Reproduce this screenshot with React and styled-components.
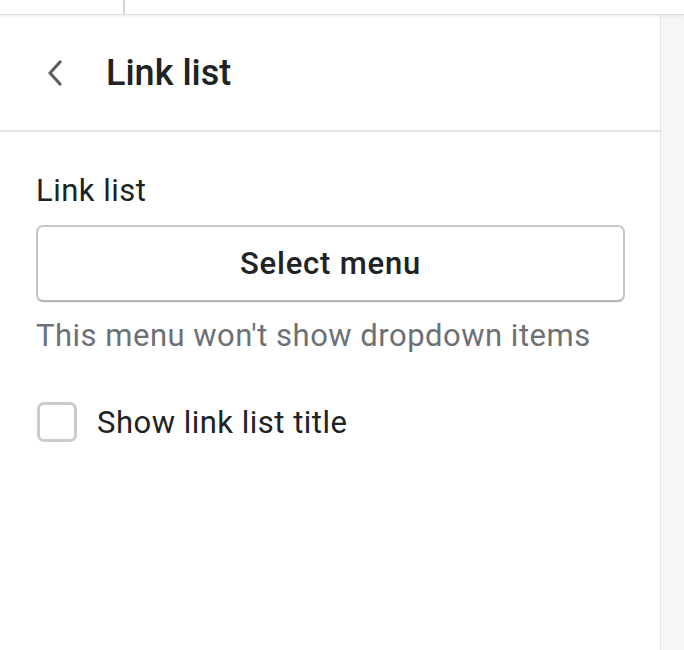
import React, { useState } from "react";
import styled, { createGlobalStyle } from "styled-components";

const GlobalStyle = createGlobalStyle`
  body {
    margin: 0;
    background: #ffffff;
    font-family: Roboto, "Liberation Sans", sans-serif;
    color: #202223;
  }
`;

const Page = styled.div`
  display: flex;
  flex-direction: column;
  height: 650px;
  overflow: hidden;
`;

const TopBar = styled.div`
  display: flex;
  height: 14px;
  flex-shrink: 0;
  border-bottom: 1px solid #dcdee0;
  box-shadow: 0 1px 3px rgba(0, 0, 0, 0.08);
  position: relative;
  z-index: 1;
`;

const TopCell = styled.div`
  width: 123px;
  border-right: 2px solid #d2d4d6;
`;

const Main = styled.div`
  display: flex;
  flex: 1;
`;

const Panel = styled.div`
  width: 660px;
  border-right: 1px solid #e1e3e5;
  display: flex;
  flex-direction: column;
`;

const Strip = styled.div`
  flex: 1;
  background: #f6f6f7;
`;

const Header = styled.div`
  display: flex;
  align-items: center;
  height: 115px;
  padding-left: 40px;
  gap: 36px;
  border-bottom: 2px solid #e1e3e5;
`;

const BackButton = styled.button`
  display: flex;
  align-items: center;
  justify-content: center;
  background: none;
  border: none;
  padding: 0;
  width: 30px;
  height: 30px;
  cursor: pointer;
`;

const Title = styled.h2`
  margin: 0;
  font-size: 36px;
  font-weight: 500;
  color: #202223;
`;

const Body = styled.div`
  padding: 39px 35px 0 36px;
`;

const Label = styled.div`
  font-size: 31px;
  letter-spacing: 0.5px;
  line-height: 40px;
  color: #202223;
  margin-bottom: 14px;
`;

const SelectButton = styled.button`
  width: 100%;
  height: 77px;
  background: #ffffff;
  border: 2px solid #c4c6c9;
  border-bottom-color: #b5b7ba;
  border-radius: 7px;
  box-shadow: 0 1px 0 rgba(0, 0, 0, 0.05);
  font-family: inherit;
  font-size: 31px;
  letter-spacing: 0.8px;
  font-weight: 500;
  color: #202223;
  cursor: pointer;
`;

const HelpText = styled.div`
  margin-top: 14px;
  font-size: 31px;
  letter-spacing: 0.5px;
  line-height: 40px;
  color: #6d7175;
`;

const CheckRow = styled.label`
  display: flex;
  align-items: center;
  gap: 20px;
  margin-top: 46px;
  cursor: pointer;
`;

const Box = styled.span`
  width: 40px;
  height: 40px;
  box-sizing: border-box;
  border: 3px solid ${(p) => (p.checked ? "#008060" : "#c9cccf")};
  background: ${(p) => (p.checked ? "#008060" : "#ffffff")};
  border-radius: 7px;
  margin-left: 1px;
`;

const CheckText = styled.span`
  font-size: 31px;
  letter-spacing: 0.5px;
  color: #202223;
`;

const Chevron = () => (
  <svg width="16" height="26" viewBox="0 0 16 26" fill="none">
    <path d="M13 2L3 13l10 11" stroke="#5c5f62" strokeWidth="3.2" strokeLinecap="round" strokeLinejoin="round" />
  </svg>
);

const App = () => {
  const [checked, setChecked] = useState(false);

  return (
    <Page>
      <GlobalStyle />
      <TopBar>
        <TopCell />
      </TopBar>
      <Main>
        <Panel>
          <Header>
            <BackButton aria-label="Back">
              <Chevron />
            </BackButton>
            <Title>Link list</Title>
          </Header>
          <Body>
            <Label>Link list</Label>
            <SelectButton>Select menu</SelectButton>
            <HelpText>This menu won't show dropdown items</HelpText>
            <CheckRow onClick={() => setChecked(!checked)}>
              <Box checked={checked} />
              <CheckText>Show link list title</CheckText>
            </CheckRow>
          </Body>
        </Panel>
        <Strip />
      </Main>
    </Page>
  );
};

export default App;
